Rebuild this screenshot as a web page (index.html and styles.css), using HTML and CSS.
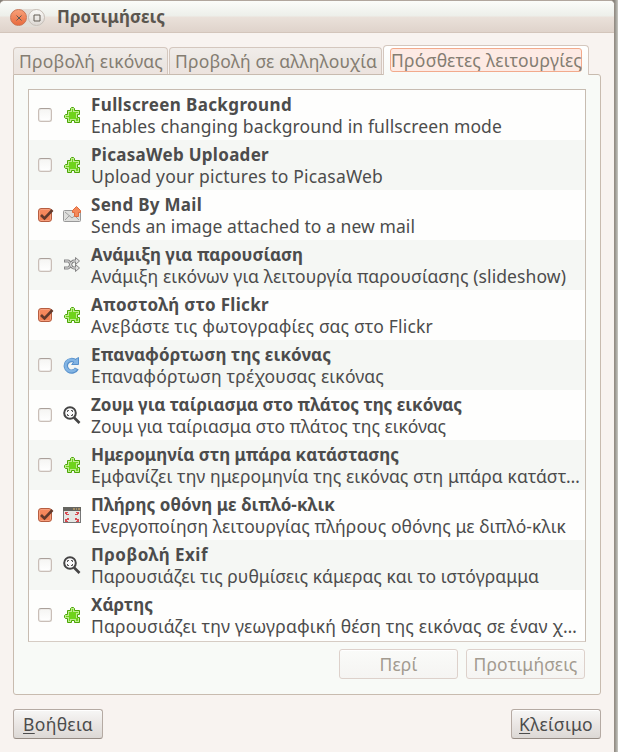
FILE: index.html
```html
<!DOCTYPE html>
<html lang="el">
<head>
<meta charset="utf-8">
<title>Προτιμήσεις</title>
<link rel="stylesheet" href="styles.css">
</head>
<body>
<svg class="defs" aria-hidden="true">
  <symbol id="plugin" viewBox="0 0 18 18">
    <path d="M4.500 4.500H7.500V2.500L8.500 1.500H10.500L11.500 2.500V4.500H16.500V8.500H14.500V11.500H16.500V16.500H11.500V14.500H8.500V16.500H4.500V12.500H2.500L1.500 11.500V9.500L2.500 8.500H4.500Z" fill="#bdec8d" stroke="#4ca607"/>
    <path d="M6 6H9V3H10V6H15V7H13V12H15V15H13V13H7V15H6V11H3V10H6Z" fill="#6fd31b"/>
  </symbol>
  <symbol id="mail" viewBox="0 0 18 18">
    <rect x=".5" y="4.500" width="17" height="11" rx="1" fill="#dededc" stroke="#999"/>
    <path d="M2 14L6.500 9.500M16 14L11.500 9.500M2 6L9 12L16 6" fill="none" stroke="#a0a0a0"/>
    <path d="M13.500 .500L17.500 4.500V6.500H15.500V10.500H11.500V6.500H9.500V4.500Z" fill="#f4895a" stroke="#df6b3e"/>
  </symbol>
  <symbol id="shuffle" viewBox="0 0 18 18">
    <path d="M1 5H5C8 5 7 12 11 12H14M1 12H5C8 12 7 5 11 5H14" fill="none" stroke="#858585" stroke-width="3"/>
    <path d="M12.500 1.500L16.500 5L12.500 8.500ZM12.500 8.500L16.500 12L12.500 15.500Z" fill="#ddd" stroke="#858585"/>
    <path d="M2 5H5C8 5 7 12 11 12H15M2 12H5C8 12 7 5 11 5H15" fill="none" stroke="#e2e2e2"/>
  </symbol>
  <symbol id="reload" viewBox="0 0 18 18">
    <path d="M13.800 12.500A5.800 5.800 0 1 1 12.500 5.500" fill="none" stroke="#5790cb" stroke-width="4.400"/>
    <path d="M15.500 1.500V8.500H8.700L11 6L10.500 4.500Z" fill="#82b4e3" stroke="#5790cb"/>
    <path d="M13 13A5.800 5.800 0 1 1 12.500 5.500" fill="none" stroke="#82b4e3" stroke-width="2.500"/>
  </symbol>
  <symbol id="zoom" viewBox="0 0 18 18">
    <path d="M11 11.500L16.500 17" stroke="#444" stroke-width="2.600"/>
    <circle cx="7" cy="7" r="5.800" fill="#fafafa" stroke="#444" stroke-width="2"/>
    <path d="M4.500 6V4.500H6M8 4.500H9.500V6M9.500 8V9.500H8M6 9.500H4.500V8" fill="none" stroke="#555"/>
  </symbol>
  <symbol id="fullscreen" viewBox="0 0 18 18">
    <rect x=".5" y="1.500" width="17" height="15" fill="#e4e7e4" stroke="#777"/>
    <path d="M0 1H18V5H0Z" fill="#666560"/>
    <path d="M10 3H12M13 3H14M15 3H17" stroke="#e5b76b"/>
    <path d="M2 6H5V7H4V8H6V9H3V8H2ZM16 6H13V7H14V8H12V9H15V8H16ZM2 16H5V15H4V14H6V12H4V13H2ZM16 16H13V15H14V14H12V12H14V13H16Z" fill="#d84a51"/>
  </symbol>
  <symbol id="tick" viewBox="0 0 18 16">
    <path d="M4 8L7.500 11.500L15.500 3" fill="none" stroke="#63392b" stroke-width="2.600"/>
  </symbol>
</svg>

<div class="window">
  <header class="titlebar">
    <div class="controls">
      <span class="control close"><svg viewBox="0 0 8 8"><path d="M1.500 1.500L6.500 6.500M6.500 1.500L1.500 6.500"/></svg></span>
      <span class="control maximize"><svg viewBox="0 0 8 8"><path d="M1 1H7V7H1Z"/></svg></span>
    </div>
    <h1><span data-width="108">Προτιμήσεις</span></h1>
  </header>

  <main>
    <nav class="tabs">
      <div class="tab first"><span data-width="144">Προβολή εικόνας</span></div>
      <div class="tab second"><span data-width="202">Προβολή σε αλληλουχία</span></div>
      <div class="tab active"><div class="focus"><span data-width="191">Πρόσθετες λειτουργίες</span></div></div>
    </nav>
    <section class="panel">
      <ul class="plugins">
        <li><i class="check"></i><svg class="icon"><use href="#plugin"/></svg><div class="text"><b><span data-width="201">Fullscreen Background</span></b><p><span data-width="411">Enables changing background in fullscreen mode</span></p></div></li>
        <li><i class="check"></i><svg class="icon"><use href="#plugin"/></svg><div class="text"><b><span data-width="178">PicasaWeb Uploader</span></b><p><span data-width="292">Upload your pictures to PicasaWeb</span></p></div></li>
        <li><i class="check on"><svg><use href="#tick"/></svg></i><svg class="icon"><use href="#mail"/></svg><div class="text"><b><span data-width="111">Send By Mail</span></b><p><span data-width="324">Sends an image attached to a new mail</span></p></div></li>
        <li><i class="check"></i><svg class="icon"><use href="#shuffle"/></svg><div class="text"><b><span data-width="212">Ανάμιξη για παρουσίαση</span></b><p><span data-width="475">Ανάμιξη εικόνων για λειτουργία παρουσίασης (slideshow)</span></p></div></li>
        <li><i class="check on"><svg><use href="#tick"/></svg></i><svg class="icon"><use href="#plugin"/></svg><div class="text"><b><span data-width="178">Αποστολή στο Flickr</span></b><p><span data-width="342">Ανεβάστε τις φωτογραφίες σας στο Flickr</span></p></div></li>
        <li><i class="check"></i><svg class="icon"><use href="#reload"/></svg><div class="text"><b><span data-width="240">Επαναφόρτωση της εικόνας</span></b><p><span data-width="293">Επαναφόρτωση τρέχουσας εικόνας</span></p></div></li>
        <li><i class="check"></i><svg class="icon"><use href="#zoom"/></svg><div class="text"><b><span data-width="371">Ζουμ για ταίριασμα στο πλάτος της εικόνας</span></b><p><span data-width="355">Ζουμ για ταίριασμα στο πλάτος της εικόνας</span></p></div></li>
        <li><i class="check"></i><svg class="icon"><use href="#plugin"/></svg><div class="text"><b><span data-width="308">Ημερομηνία στη μπάρα κατάστασης</span></b><p><span data-width="489">Εμφανίζει την ημερομηνία της εικόνας στη μπάρα κατάστ…</span></p></div></li>
        <li><i class="check on"><svg><use href="#tick"/></svg></i><svg class="icon"><use href="#fullscreen"/></svg><div class="text"><b><span data-width="244">Πλήρης οθόνη με διπλό-κλικ</span></b><p><span data-width="475">Ενεργοποίηση λειτουργίας πλήρους οθόνης με διπλό-κλικ</span></p></div></li>
        <li><i class="check"></i><svg class="icon"><use href="#zoom"/></svg><div class="text"><b><span data-width="117">Προβολή Exif</span></b><p><span data-width="448">Παρουσιάζει τις ρυθμίσεις κάμερας και το ιστόγραμμα</span></p></div></li>
        <li><i class="check"></i><svg class="icon"><use href="#plugin"/></svg><div class="text"><b><span data-width="62">Χάρτης</span></b><p><span data-width="486">Παρουσιάζει την γεωγραφική θέση της εικόνας σε έναν χ…</span></p></div></li>
      </ul>
      <div class="plugin-actions">
        <button class="button disabled" disabled><span data-width="38">Περί</span></button>
        <button class="button disabled" disabled><span data-width="104">Προτιμήσεις</span></button>
      </div>
    </section>
    <footer>
      <button class="button"><span data-width="70"><u>Β</u>οήθεια</span></button>
      <button class="button"><span data-width="74"><u>Κ</u>λείσιμο</span></button>
    </footer>
  </main>
</div>
<script src="script.js"></script>
</body>
</html>
```
FILE: styles.css
```css
* { box-sizing: border-box; }

body {
  margin: 0;
  height: 752px;
  overflow: hidden;
  background: linear-gradient(to right, #858078 614px, #a5a39c 616px, #cac9c4 618px);
  font: 17.500px/22px "Noto Sans", sans-serif;
  color: #4c4c4c;
}

.defs { display: block; width: 0; height: 0; }

.window {
  width: 615px;
  height: 752px;
  overflow: hidden;
  background: #f8f3f0;
  border-top: 1px solid #b1a69d;
  border-right: 1px solid #958d85;
  border-radius: 5px 5px 0 0;
}

.titlebar {
  display: flex;
  align-items: center;
  height: 32px;
  padding-left: 10px;
  background: linear-gradient(#fbfcf9, #edefea 48%, #eae1da 52%, #dfd3cb);
  border-bottom: 1px solid #d3c5bb;
}

.controls {
  display: flex;
  gap: 1px;
  width: 35px;
  height: 18px;
  margin-top: 2px;
  align-items: center;
  border-radius: 9px;
  background: #e1ddd7;
}

.control {
  display: flex;
  align-items: center;
  justify-content: center;
  width: 17px;
  height: 17px;
  border: 1px solid #c7bfb8;
  border-radius: 50%;
  background: linear-gradient(#faf9f7, #ddd8d3);
}

.control.close { background: linear-gradient(#f8a078, #e96b3e); border-color: #c97555; }
.control svg { width: 8px; height: 8px; fill: none; stroke: #625c55; }

h1 {
  margin: 0 0 0 12px;
  font-size: 17px;
  line-height: 22px;
  color: #5b564f;
}

[data-width] { display: inline-block; white-space: pre; }

main { padding: 12px 13px 0; }

.tabs {
  display: flex;
  align-items: flex-end;
  gap: 1px;
  height: 29px;
}

.tab {
  height: 27px;
  padding: 2px 0 0 5px;
  border: 1px solid #d4c7be;
  border-bottom: 0;
  border-radius: 4px 4px 0 0;
  background: linear-gradient(#f1edea, #ebe6e2 60%, #ede3de);
  color: #847d72;
}

.tab.first { width: 155px; }
.tab.second { width: 213px; }

.tab.active {
  z-index: 1;
  width: 206px;
  height: 30px;
  margin-bottom: -1px;
  padding: 2px 0 0 6px;
  background: linear-gradient(#fff, #f8faf7);
}

.focus {
  width: 192px;
  height: 24px;
  border: 1px solid #f2aa8c;
  border-radius: 3px;
  background: #fdeae4;
}

.panel {
  height: 621px;
  padding: 14px;
  border: 1px solid #c8bbaf;
  border-radius: 0 3px 3px 3px;
  background: #f8faf7;
}

.plugins {
  width: 558px;
  margin: 0;
  padding: 0;
  list-style: none;
  border: 1px solid #c7bcb1;
  border-bottom-color: #d6ccc4;
  background: #fefefd;
}

.plugins li {
  display: flex;
  height: 50px;
  padding: 0 0 0 9px;
}

.plugins li:nth-child(even) { background: #f5f7f4; }
.plugins li:last-child { height: 51px; }

.check {
  width: 14px;
  height: 14px;
  margin-top: 18px;
  border: 1px solid #c9beb7;
  border-top-color: #aaa09a;
  border-radius: 3px;
  background: linear-gradient(#f5f5f3, #fff);
  box-shadow: inset 0 0 0 1px #eeebe8;
}

.check.on {
  border-color: #b65e40;
  background: linear-gradient(#f78b60, #f27e50);
  box-shadow: inset 0 0 0 1px #f79f7d;
}

.check svg { display: block; width: 18px; height: 16px; margin: -2px 0 0 -2px; overflow: visible; }
.icon { width: 18px; height: 18px; margin: 16px 0 0 11px; }
.text { margin-left: 10px; padding-top: 4px; }
.text b, .text p { display: block; height: 22px; margin: 0; }
.text b { font-size: 17px; }
.text p { margin-top: -1px; }

.plugin-actions {
  display: flex;
  justify-content: flex-end;
  gap: 8px;
  padding: 7px 1px 0 0;
}

.button {
  display: flex;
  align-items: center;
  justify-content: center;
  width: 90px;
  height: 30px;
  padding: 0 0 1px;
  border: 1px solid #b5aaa3;
  border-bottom-color: #958b84;
  border-radius: 3px;
  background: linear-gradient(#f7f7f6, #ebe7e5 48%, #dcd8d5);
  box-shadow: inset 0 1px #fff;
  color: #4c4c4c;
  font: inherit;
}

.button.disabled {
  width: 119px;
  border-color: #ddd1cb;
  background: linear-gradient(#fafbf9, #f5f4f2);
  color: #a39b90;
}

.button u { text-underline-offset: 2px; text-decoration-thickness: 1px; }

footer { display: flex; justify-content: space-between; padding-top: 14px; }
```
FILE: script.js
```js
// Fit each label to its allotted width by spreading the difference over its letters.
for (const label of document.querySelectorAll('[data-width]')) {
  const width = Number(label.dataset.width);
  const gap = (width - label.getBoundingClientRect().width) / label.textContent.length;
  label.style.letterSpacing = gap + 'px';
}
```
